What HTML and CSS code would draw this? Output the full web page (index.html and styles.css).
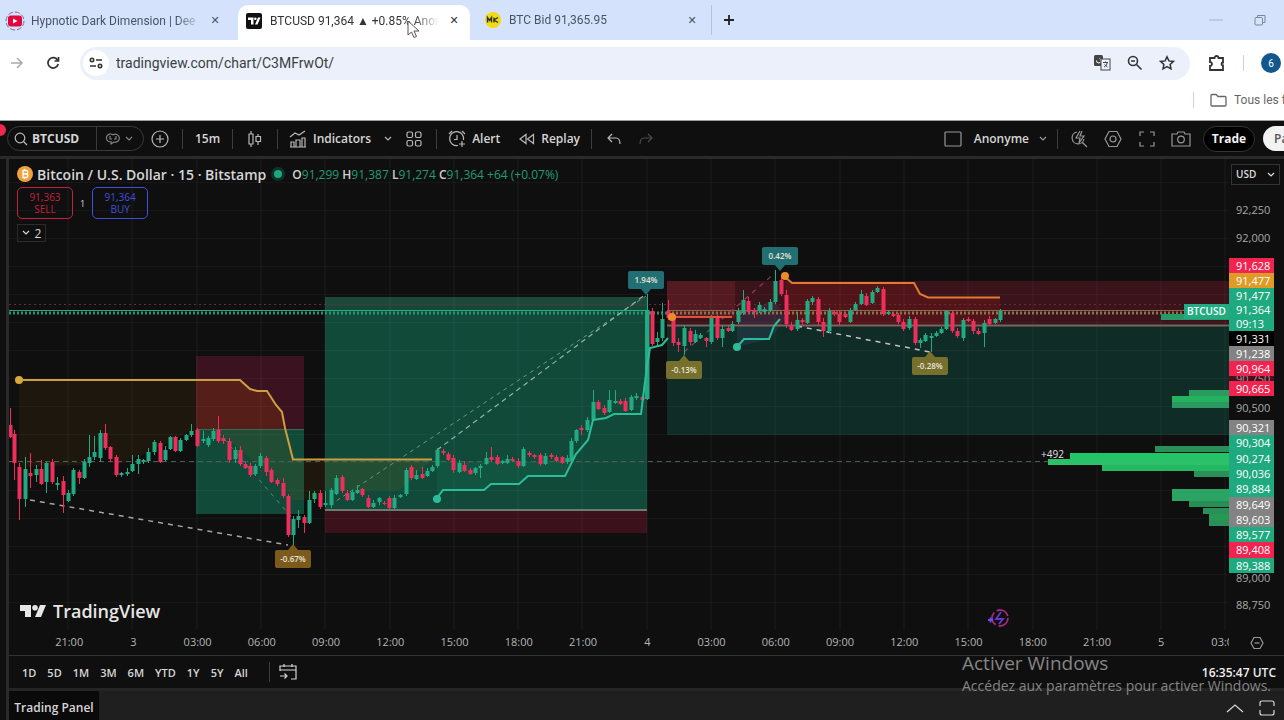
FILE: index.html
```html
<!DOCTYPE html>
<html lang="fr">
<head>
  <meta charset="UTF-8" />
  <meta name="viewport" content="width=device-width, initial-scale=1.0"/>
  <title>BTCUSD 91,364 - TradingView</title>
  <link rel="stylesheet" href="styles.css">
</head>
<body>
  <header class="browser">
    <div class="tabs">
      <div class="tab first">
        <svg width="20" height="20" viewBox="0 0 20 20"><circle cx="10" cy="10" r="9" fill="none" stroke="#7a6f8c" stroke-dasharray="5 2"/><rect x="3" y="4.500" width="14" height="11" rx="3" fill="#e3063c"/><path d="M8 7.500v5l4.500-2.500z" fill="#fff"/></svg>
        <span class="tab-title">Hypnotic Dark Dimension | Dee</span>
        <button class="x" aria-label="Close">&#10005;</button>
      </div>
      <div class="tab active">
        <svg width="16" height="16" viewBox="0 0 16 16"><rect width="16" height="16" rx="2" fill="#111"/><path d="M2 4.500h5.500v7H5V7H2zM12 4.500h2.500l-3 7H9z" fill="#fff"/><circle cx="9.300" cy="5.800" r="1.300" fill="#fff"/></svg>
        <span class="tab-title">BTCUSD 91,364 ▲ +0.85% Anonyme</span>
        <button class="x" aria-label="Close">&#10005;</button>
      </div>
      <div class="tab third">
        <svg width="16" height="16" viewBox="0 0 16 16"><circle cx="8" cy="8" r="8" fill="#f1dc12"/><path d="M2.500 10.500v-5l2 3 2-3v5M9 5.500v5M13 5.500l-4 2.500 4 2.500" fill="none" stroke="#333" stroke-width="1.400"/></svg>
        <span class="tab-title">BTC Bid 91,365.95</span>
        <button class="x" aria-label="Close">&#10005;</button>
      </div>
      <button class="new-tab" aria-label="New tab"><svg width="12" height="12" viewBox="0 0 12 12"><path d="M6 1v10M1 6h10" stroke="#222" stroke-width="1.800"/></svg></button>
      <div class="win-buttons">
        <svg width="16" height="12" viewBox="0 0 16 12"><path d="M1 6h14" stroke="#a9b4c8"/></svg>
        <svg width="12" height="12" viewBox="0 0 12 12" fill="none" stroke="#7c879c"><rect x="1" y="3.500" width="7.500" height="7.500" rx="1"/><path d="M3.500 3V1.500h7.500v7h-2"/></svg>
      </div>
    </div>

    <div class="nav">
      <button class="nav-btn" aria-label="Forward"><svg width="14" height="14" viewBox="0 0 14 14" fill="none" stroke="#aaa" stroke-width="1.500"><path d="M1 7h11M7 2l5 5-5 5"/></svg></button>
      <button class="nav-btn" aria-label="Reload"><svg width="14" height="14" viewBox="0 0 14 14" fill="none" stroke="#333" stroke-width="1.700"><path d="M11.800 4.500A5.200 5.200 0 1 0 12.200 8"/><path d="M12.500 1v4h-4"/></svg></button>
      <div class="omnibox">
        <span class="site-info"><svg width="14" height="12" viewBox="0 0 14 12" fill="none" stroke="#333" stroke-width="1.600"><circle cx="3" cy="3" r="1.700"/><path d="M7 3h6M1 9h6"/><circle cx="11" cy="9" r="1.700"/></svg></span>
        <input class="url" type="text" aria-label="Address" value="tradingview.com/chart/C3MFrwOt/">
        <svg width="18" height="18" viewBox="0 0 18 18"><rect x="1" y="1" width="9" height="11" rx="1.500" fill="#444"/><path d="M3.500 6.500a2.300 2.300 0 1 0 3-2" fill="none" stroke="#fff"/><rect x="8" y="5" width="9" height="11" fill="#eef2fa" stroke="#444"/><path d="M10 8.500h5M12.500 7.500v1M11 13c2-1 3-2.500 3-4M11.500 10.500l3 2.500" stroke="#444" fill="none"/></svg>
        <svg width="16" height="16" viewBox="0 0 16 16" fill="none" stroke="#333" stroke-width="1.600"><circle cx="6" cy="6" r="4.500"/><path d="M9.500 9.500l5 5M4 6h4"/></svg>
        <svg width="16" height="16" viewBox="0 0 16 16" fill="none" stroke="#333" stroke-width="1.500"><path d="M8 1.800l1.900 4.100 4.500.5-3.300 3 .9 4.500L8 11.700l-4 2.200.9-4.500-3.300-3 4.500-.5z"/></svg>
      </div>
      <svg width="18" height="18" viewBox="0 0 18 18" fill="none" stroke="#333" stroke-width="1.800"><path d="M2 4h4.500a2 2 0 0 1 4 0H15v4.500a1.500 1.500 0 0 0 0 3V16H2v-4a2 2 0 0 0 0-4z"/></svg>
      <i class="nav-line"></i>
      <button class="avatar">6</button>
    </div>

    <div class="bookmarks">
      <i class="nav-line"></i>
      <svg width="17" height="14" viewBox="0 0 17 14" fill="none" stroke="#666" stroke-width="1.300"><path d="M1 2.500a1 1 0 0 1 1-1h4l2 2h7a1 1 0 0 1 1 1V12a1 1 0 0 1-1 1H2a1 1 0 0 1-1-1z"/></svg>
      <a href="#">Tous les favoris</a>
    </div>
    <svg class="cursor" width="14" height="20" viewBox="0 0 14 20"><path d="M1 1v14l3.500-3 2.500 5.500 2.500-1L7 11h5z" fill="#fff" stroke="#555"/></svg>
  </header>

  <div class="app">
    <div class="toolbar">
      <span class="notif"></span>
      <div class="symbol-pill">
        <svg width="14" height="14" viewBox="0 0 14 14" class="ic"><circle cx="6" cy="6" r="4.800"/><path d="M9.500 9.500l3.500 3.500"/></svg>
        <button class="symbol">BTCUSD</button>
        <button class="compare" aria-label="Session"><svg width="16" height="14" viewBox="0 0 16 14" class="ic"><path d="M5 10a4 4 0 1 1 3-7M5 4v3h2M8 3a4 4 0 1 1 1 7l-3 2v-3M11 4v3H9"/></svg><svg width="8" height="6" viewBox="0 0 8 6" class="ic"><path d="M1 1l3 3 3-3"/></svg></button>
      </div>
      <button class="tb" aria-label="Add"><svg width="18" height="18" viewBox="0 0 18 18" class="ic"><circle cx="9" cy="9" r="8"/><path d="M9 5v8M5 9h8"/></svg></button>
      <i class="sep"></i>
      <button class="tb interval">15m</button>
      <i class="sep"></i>
      <button class="tb" aria-label="Candles"><svg width="16" height="18" viewBox="0 0 16 18" class="ic"><path d="M4 1v3M4 14v3M2 4h4v10H2zM11 4v2M11 12v3M9 6.500h4.500v5H9z"/></svg></button>
      <i class="sep"></i>
      <button class="tb wide"><svg width="18" height="18" viewBox="0 0 18 18" class="ic"><path d="M1 7l5-4 4 2 6-4M2 17v-5h3v5zM7 17v-7h4v7zM13 17V8h3v9zM1 17h16"/></svg>Indicators</button>
      <button class="tb dropdown" aria-label="Favorites"><svg width="8" height="6" viewBox="0 0 8 6" class="ic"><path d="M1 1l3 3 3-3"/></svg></button>
      <button class="tb small" aria-label="Layouts"><svg width="16" height="16" viewBox="0 0 16 16" class="ic"><rect x="1" y="1" width="5.500" height="5.500" rx="1.500"/><rect x="9.500" y="1" width="5.500" height="5.500" rx="1.500"/><rect x="1" y="9.500" width="5.500" height="5.500" rx="1.500"/><rect x="9.500" y="9.500" width="5.500" height="5.500" rx="1.500"/></svg></button>
      <i class="sep"></i>
      <button class="tb wide"><svg width="18" height="18" viewBox="0 0 18 18" class="ic"><path d="M15.500 10A7 7 0 1 0 10 15.500M9 5v4.500H6M1 4l3-3M17 4l-3-3M14 11v6M11 14h6"/></svg>Alert</button>
      <button class="tb wide replay"><svg width="16" height="12" viewBox="0 0 16 12" class="ic"><path d="M7 1.500v9L1 6zM14.500 1.500v9L8.500 6z"/></svg>Replay</button>
      <i class="sep"></i>
      <button class="tb" aria-label="Undo"><svg width="14" height="12" viewBox="0 0 14 12" class="ic"><path d="M5 1L1 5l4 4M1 5h8q4 0 4 6"/></svg></button>
      <button class="tb off" aria-label="Redo"><svg width="14" height="12" viewBox="0 0 14 12" class="ic"><path d="M9 1l4 4-4 4M13 5H5Q1 5 1 11"/></svg></button>

      <div class="tb-right">
        <button class="tb wide layout"><svg width="18" height="16" viewBox="0 0 18 16" class="ic"><rect x="1" y="1" width="16" height="14" rx="1"/></svg><span class="layout-name">Anonyme</span></button>
        <button class="tb small" aria-label="Manage layouts"><svg width="8" height="6" viewBox="0 0 8 6" class="ic"><path d="M1 1l3 3 3-3"/></svg></button>
        <i class="sep tight"></i>
        <button class="tb" aria-label="Quick search"><svg width="18" height="18" viewBox="0 0 18 18" class="ic"><path d="M7 2a6 6 0 1 0 7 7M12.500 12.500L17 17M10 1L6 8h4l-1 5 5-7h-4l2-5"/></svg></button>
        <button class="tb" aria-label="Settings"><svg width="18" height="18" viewBox="0 0 18 18" class="ic"><path d="M5 1.500h8L17 9l-4 7.500H5L1 9z"/><circle cx="9" cy="9" r="3"/></svg></button>
        <button class="tb" aria-label="Fullscreen"><svg width="16" height="16" viewBox="0 0 16 16" class="ic"><path d="M1 5V1h4M11 1h4v4M15 11v4h-4M5 15H1v-4"/></svg></button>
        <button class="tb" aria-label="Snapshot"><svg width="20" height="16" viewBox="0 0 20 16" class="ic"><path d="M1 3h5l1-2h6l1 2h5v12H1z"/><circle cx="10" cy="8.500" r="3.300"/></svg></button>
        <button class="trade">Trade</button>
        <button class="publish">Paper</button>
      </div>
    </div>

    <div class="workspace">
      <div class="main">
        <div class="chart-row">
          <div class="chart">
            <svg id="chart" viewBox="9 159 1220 471"></svg>
            <div class="legend">
              <div class="legend-title">
                <svg width="16" height="16" viewBox="0 0 16 16"><circle cx="8" cy="8" r="8" fill="#f0a13c"/><path d="M6 4v8M6 4.500h3a1.700 1.700 0 0 1 0 3.500H6h3.500a1.800 1.800 0 0 1 0 3.500H6M7.500 3v1.500M7.500 11.500V13" fill="none" stroke="#fff" stroke-width="1.300"/></svg>
                <h1>Bitcoin / U.S. Dollar · 15 · Bitstamp</h1>
                <span class="status"></span>
                <p class="ohlc"><b>O</b>91,299 <b>H</b>91,387 <b>L</b>91,274 <b>C</b>91,364 +64 (+0.07%)</p>
              </div>
              <div class="orders">
                <button class="sell">91,363<br>SELL</button>
                <span>1</span>
                <button class="buy">91,364<br>BUY</button>
              </div>
              <button class="collapse"><svg width="8" height="6" viewBox="0 0 8 6" class="ic"><path d="M1 1l3 3 3-3"/></svg>2</button>
            </div>
            <div class="brand">
              <svg width="28" height="16" viewBox="0 0 28 16" fill="#e6e6e6"><path d="M1 2h11v12H6V8H1z"/><circle cx="16" cy="4.800" r="2.800"/><path d="M21 2h6l-5 12h-6z"/></svg>
              TradingView
            </div>
            <svg class="spark" width="24" height="24" viewBox="0 0 24 24" fill="none" stroke-width="1.800"><circle cx="13" cy="12" r="8" stroke="#a02a78" stroke-dasharray="14 3"/><path d="M14 6l-5 7h7l-4 5" stroke="#6a35d0"/><path d="M1 14h5M3.500 11.500v5" stroke="#6a50e8"/></svg>
          </div>
          <div class="price-axis">
            <button class="currency">USD <svg width="8" height="6" viewBox="0 0 8 6" class="ic"><path d="M1 1l3 3 3-3"/></svg></button>
            <div class="ticks"><span>92,250</span><span>92,000</span></div>
            <div class="tags">
              <span class="red">91,628</span>
              <span class="orange">91,477</span>
              <span class="green">91,477</span>
              <span class="green last">91,364<br>09:13</span>
            </div>
            <div class="tags">
              <span class="black">91,331</span>
              <span class="gray">91,238</span>
              <span class="red">90,964</span>
              <span class="hidden-tick">90,750</span>
              <span class="red">90,665</span>
            </div>
            <span class="mid-tick">90,500</span>
            <div class="tags lower">
              <span class="gray">90,321</span>
              <span class="green">90,304</span>
              <span class="green">90,274</span>
              <span class="green">90,036</span>
              <span class="green">89,884</span>
              <span class="gray">89,649</span>
              <span class="gray">89,603</span>
              <span class="green">89,577</span>
              <span class="red">89,408</span>
              <span class="green">89,388</span>
            </div>
            <span class="cut-tick">89,000</span>
            <span class="low-tick">88,750</span>
          </div>
        </div>

        <div class="time-row">
          <div class="times">
            <span>21:00</span><span>3</span><span>03:00</span><span>06:00</span><span>09:00</span><span>12:00</span><span>15:00</span><span>18:00</span><span>21:00</span><span>4</span><span>03:00</span><span>06:00</span><span>09:00</span><span>12:00</span><span>15:00</span><span>18:00</span><span>21:00</span><span>5</span><span>03:00</span>
          </div>
          <button class="axis-settings" aria-label="Axis settings"><svg width="14" height="14" viewBox="0 0 14 14" class="ic"><path d="M4 1.500h6L13 7l-3 5.500H4L1 7z"/><path d="M4.500 7h5"/></svg></button>
        </div>

        <div class="ranges">
          <button>1D</button><button>5D</button><button>1M</button><button>3M</button><button>6M</button><button>YTD</button><button>1Y</button><button>5Y</button><button>All</button>
          <i class="sep"></i>
          <button class="goto" aria-label="Go to date"><svg width="18" height="18" viewBox="0 0 18 18" class="ic"><path d="M1 8V3h16v13h-5M1 7h16M5 1v3M13 1v3M1 13h7M5.500 10.500L8 13l-2.500 2.500"/></svg></button>
          <span class="clock">16:35:47 UTC</span>
        </div>

        <div class="bottom-panel">
          <button class="panel-tab">Trading Panel</button>
          <div class="panel-tools">
            <svg width="18" height="10" viewBox="0 0 18 10" class="ic"><path d="M1 9l8-7 8 7"/></svg>
            <svg width="16" height="16" viewBox="0 0 16 16" class="ic"><path d="M1 6V3q0-2 2-2h10q2 0 2 2v3M1 10v3q0 2 2 2h10q2 0 2-2v-3"/></svg>
          </div>
        </div>
      </div>
    </div>

    <div class="activate">
      <p class="activate-title">Activer Windows</p>
      <p>Accédez aux paramètres pour activer Windows.</p>
    </div>
  </div>

  <script src="script.js"></script>
</body>
</html>
```

FILE: styles.css
```css
* {
  box-sizing: border-box;
}
body {
  margin: 0;
  min-height: 100vh;
  display: flex;
  flex-direction: column;
  overflow: hidden;
  background-color: #0f0f0f;
  font-family: "Open Sans", "Noto Sans", sans-serif;
}
button {
  border: none;
  background: none;
  padding: 0;
  margin: 0;
  font: inherit;
  color: inherit;
  cursor: pointer;
}
p, h1 {
  margin: 0;
}
svg {
  display: block;
  flex-shrink: 0;
}
.ic {
  fill: none;
  stroke: currentColor;
  stroke-width: 1.2;
}

/* browser */
.browser {
  position: relative;
  background: #fff;
  color: #333;
  font-family: Roboto, sans-serif;
  font-size: 12px;
  height: 121px;
  border-bottom: 1px solid #9aa09e;
}
.tabs {
  display: flex;
  height: 40px;
  padding-top: 5px;
  background: #d5e2fc;
}
.tab {
  display: flex;
  align-items: center;
  height: 35px;
  padding-bottom: 4px;
  gap: 8px;
  color: #4a5268;
}
.tab.first {
  width: 238px;
  padding-left: 5px;
  padding-right: 16px;
  gap: 6px;
}
.tab.active {
  width: 232px;
  padding-left: 8px;
  padding-right: 9px;
  background: #fff;
  border-radius: 10px 10px 0 0;
  color: #333;
}
.tab.third {
  width: 242px;
  padding-left: 15px;
  padding-right: 12px;
  border-right: 1px solid #b5c2dc;
  height: 30px;
  padding-bottom: 0;
}
.tab-title {
  flex: 1;
  min-width: 0;
  overflow: hidden;
  white-space: nowrap;
  mask-image: linear-gradient(90deg, #000 85%, transparent);
}
.x {
  width: 14px;
  font-size: 11px;
  font-weight: bold;
  font-family: "DejaVu Sans", sans-serif;
}
.new-tab {
  width: 34px;
  height: 30px;
  display: flex;
  align-items: center;
  justify-content: center;
}
.win-buttons {
  display: flex;
  align-items: center;
  gap: 30px;
  height: 30px;
  margin-left: auto;
  padding-right: 18px;
}
.nav {
  display: flex;
  align-items: center;
  height: 46px;
  padding: 0 3px 0 0;
}
.nav-btn {
  width: 38px;
  display: flex;
  justify-content: center;
}
.nav-btn:first-child {
  width: 34px;
}
.omnibox {
  flex: 1;
  display: flex;
  align-items: center;
  gap: 16px;
  height: 33px;
  margin: 0 18px 0 8px;
  padding: 0 15px 0 3px;
  border-radius: 17px;
  background: #ebf0fa;
}
.site-info {
  display: flex;
  align-items: center;
  justify-content: center;
  width: 26px;
  height: 26px;
  border-radius: 50%;
  background: #fff;
}
.url {
  flex: 1;
  border: none;
  background: none;
  padding: 0;
  margin-left: -9px;
  outline: none;
  color: #3c4043;
  font: 14px Roboto, sans-serif;
}
.nav-line {
  width: 1px;
  height: 16px;
  margin: 0 17px;
  background: #c5d3ee;
}
.avatar {
  width: 20px;
  height: 20px;
  border-radius: 50%;
  background: #14578f;
  color: #fff;
  font-size: 10px;
}
.bookmarks {
  display: flex;
  align-items: center;
  justify-content: flex-end;
  height: 28px;
}
.bookmarks .nav-line {
  margin: 0 16px;
}
.bookmarks a {
  width: 50px;
  margin-left: 7px;
  overflow: hidden;
  white-space: nowrap;
  color: #666;
  text-decoration: none;
}
.cursor {
  position: absolute;
  left: 407px;
  top: 20px;
}

/* app */
.app {
  position: relative;
  flex: 1;
  display: flex;
  flex-direction: column;
  color: #d6d6d6;
  font-size: 12px;
}
.toolbar {
  position: relative;
  display: flex;
  align-items: center;
  height: 38px;
  padding-left: 7px;
  overflow: hidden;
  white-space: nowrap;
  font-weight: 600;
  border-bottom: 3px solid #2a2a2a;
}
.toolbar .ic {
  opacity: .85;
}
.notif {
  position: absolute;
  left: -6px;
  top: 3px;
  width: 12px;
  height: 12px;
  border-radius: 50%;
  background: #f0284f;
}
.symbol-pill {
  display: flex;
  align-items: center;
  width: 137px;
  height: 25px;
  padding-left: 6px;
  border: 1px solid #3a3a3a;
  border-radius: 13px;
}
.symbol {
  width: 68px;
  padding-left: 4px;
  text-align: left;
  font-weight: 700;
}
.compare {
  flex: 1;
  display: flex;
  align-items: center;
  justify-content: center;
  gap: 4px;
  height: 23px;
  padding-right: 3px;
  border-left: 1px solid #3a3a3a;
  color: #999;
}
.tb {
  display: flex;
  align-items: center;
  justify-content: center;
  width: 32px;
  height: 30px;
}
.tb.interval {
  width: 37px;
}
.tb.wide {
  width: auto;
  gap: 6px;
  padding: 0 5px;
}
.tb.dropdown {
  width: 24px;
}
.tb.small {
  width: 28px;
}
.tb.replay {
  padding-left: 14px;
}
.tb.small + .sep {
  margin-left: 8px;
}
.off {
  color: #555;
}
.sep {
  width: 1px;
  height: 20px;
  margin: 0 6px;
  background: #3d3d3d;
}
.tb-right {
  display: flex;
  align-items: center;
  margin-left: auto;
}
.tb-right .tb {
  color: #b0b0b0;
}
.tb-right .tb:not(.wide):not(.small) {
  width: 34px;
}
.tb.layout {
  padding-right: 0;
}
.layout-name {
  padding-left: 6px;
  color: #d6d6d6;
}
.tb.small + .sep.tight {
  margin: 0 4px 0 0;
}
.trade {
  width: 52px;
  height: 26px;
  margin: 0 8px 0 5px;
  border: 1px solid #333;
  border-radius: 13px;
  background: #000;
  color: #f0f0f0;
  font-weight: 700;
}
.publish {
  width: 21px;
  height: 25px;
  padding-left: 11px;
  overflow: hidden;
  text-align: left;
  border-radius: 13px 0 0 13px;
  background: #f2f2f2;
  color: #555;
}
.workspace {
  flex: 1;
  display: flex;
  padding-left: 6px;
}
.main {
  flex: 1;
  min-width: 0;
  display: flex;
  flex-direction: column;
  border-left: 3px solid #2a2a2a;
}
.chart-row {
  display: flex;
}
.chart {
  position: relative;
  flex: 1;
  min-width: 0;
}
#chart {
  width: 100%;
  height: auto;
}
.legend {
  position: absolute;
  left: 8px;
  top: 6px;
}
.legend-title {
  display: flex;
  align-items: center;
  height: 18px;
  gap: 4px;
  white-space: nowrap;
}
.legend-title h1 {
  font-size: 14px;
  font-weight: 600;
}
.status {
  width: 8px;
  height: 8px;
  margin: 0 6px 0 4px;
  border-radius: 50%;
  background: #1fa67d;
  box-shadow: 0 0 0 3px #0c3329;
}
.ohlc {
  color: #229a78;
}
.ohlc b {
  color: #d0d0d0;
  font-weight: 600;
}
.orders {
  display: flex;
  align-items: center;
  gap: 7px;
  margin-top: 4px;
}
.orders span {
  font-size: 9px;
}
.orders button {
  width: 56px;
  height: 32px;
  border: 1px solid;
  border-radius: 5px;
  font-size: 10px;
  line-height: 12px;
}
.sell {
  color: #c4213f;
}
.buy {
  color: #3f4fdc;
}
.collapse {
  display: flex;
  align-items: center;
  justify-content: center;
  gap: 5px;
  width: 29px;
  height: 18px;
  margin-top: 5px;
  border: 1px solid #2c2c2c;
}
.brand {
  position: absolute;
  left: 10px;
  bottom: 8px;
  display: flex;
  align-items: center;
  gap: 6px;
  font: 600 18px/22px "Open Sans", sans-serif;
  color: #e6e6e6;
}
.spark {
  position: absolute;
  right: 218px;
  bottom: 0;
}
.price-axis {
  width: 55px;
  padding-top: 5px;
  font-size: 11px;
  line-height: 15px;
  color: #a8a8a8;
}
.currency {
  display: flex;
  align-items: center;
  justify-content: space-between;
  width: 49px;
  height: 21px;
  margin-left: 2px;
  padding: 0 4px;
  border: 1px solid #333;
  font-weight: 600;
  font-size: 10px;
  color: #ddd;
}
.ticks {
  display: grid;
  grid-auto-rows: 28px;
  padding-top: 11px;
  height: 73px;
}
.price-axis span {
  display: block;
  padding-left: 7px;
}
.ticks span {
  line-height: 28px;
}
.tags {
  width: 45px;
  color: #fff;
}
.tags .last {
  height: 28px;
  line-height: 14px;
}
.tags .hidden-tick {
  height: 5px;
  line-height: 5px;
  overflow: hidden;
  background: #4a1020;
  color: #999;
}
.red {
  background: #f0244f;
}
.orange {
  background: #e09a26;
}
.green {
  background: #1fa97f;
}
.gray {
  background: #838383;
}
.black {
  background: #000;
}
.price-axis .mid-tick {
  line-height: 24px;
}
.tags.lower {
  display: grid;
  grid-auto-rows: 1fr;
  height: 153px;
}
.price-axis .cut-tick {
  height: 10px;
  line-height: 9px;
  overflow: hidden;
}
.price-axis .low-tick {
  padding-top: 14px;
}
.time-row {
  display: flex;
  height: 26px;
  border-bottom: 1px solid #333;
  font-size: 11px;
  line-height: 24px;
  color: #b5b5b5;
}
.times {
  flex: 1;
  min-width: 0;
  display: flex;
  overflow: hidden;
  padding-left: 2.2%;
}
.times span {
  flex: 0 0 5.39%;
  text-align: center;
}
.axis-settings {
  display: flex;
  align-items: center;
  justify-content: center;
  width: 55px;
  color: #999;
}
.ranges {
  display: flex;
  align-items: center;
  height: 35px;
  gap: 11px;
  padding: 0 8px 0 13px;
  font-weight: 600;
  font-size: 11px;
  border-bottom: 3px solid #252525;
}
.ranges .sep {
  margin: 0 0 0 10px;
}
.goto {
  margin-left: -2px;
}
.clock {
  margin-left: auto;
  font-size: 12px;
  color: #eee;
}
.bottom-panel {
  flex: 1;
  display: flex;
  justify-content: space-between;
  background: #1f1f1f;
}
.panel-tab {
  width: 90px;
  padding-top: 4px;
  background: #0a0a0a;
  font-weight: 600;
}
.panel-tools {
  display: flex;
  align-items: center;
  gap: 15px;
  padding: 4px 9px 0 0;
}
.activate {
  position: absolute;
  right: 9px;
  bottom: 25px;
  width: 313px;
  white-space: nowrap;
  color: #858585;
  font-size: 14px;
  line-height: 19px;
}
.activate-title {
  font-size: 19px;
  line-height: 26px;
}
```

FILE: script.js
```js
const UP = "#22ab82";
const DOWN = "#ee2f5c";

// x, high, body top, body bottom, low, 1 = up / 0 = down
const candles = [
  [10,408,425,437,438,0],[14,430,434,463,480,0],[19,463,467,499,520,0],[25,457,469,499,507,1],[30,453,473,476,488,0],
  [36,465,469,475,482,1],[41,460,469,484,485,0],[46,462,463,482,493,1],[52,459,462,482,484,0],[57,477,483,485,490,1],
  [63,476,481,495,513,0],[68,490,493,501,502,1],[73,468,470,494,496,1],[79,470,472,478,484,0],[84,459,462,478,479,1],
  [89,435,457,463,467,1],[94,436,452,457,460,1],[100,430,433,458,462,1],[105,424,433,448,450,0],[110,446,447,459,462,0],
  [116,455,457,475,477,0],[121,472,473,475,477,1],[127,468,472,474,476,1],[132,455,464,471,472,1],[138,455,459,464,474,1],
  [143,459,460,462,464,1],[148,448,452,461,463,1],[154,440,442,452,455,1],[160,441,443,462,463,0],[165,446,450,460,461,1],
  [170,436,437,449,450,1],[175,436,437,451,452,0],[180,438,440,451,452,1],[186,434,435,440,441,1],[191,424,431,435,437,1],
  [197,428,430,446,447,0],[203,431,439,441,443,1],[208,436,438,445,447,1],[213,428,431,439,441,1],[218,416,430,441,443,0],
  [223,435,438,441,444,0],[229,438,441,460,463,0],[235,447,450,459,463,1],[240,446,450,464,466,0],[245,462,464,468,469,0],
  [250,463,466,475,477,0],[255,464,466,474,476,1],[260,453,456,466,468,1],[266,456,458,472,476,0],[271,468,470,482,483,0],
  [277,478,480,484,486,0],[283,478,483,496,498,0],[288,494,496,535,537,0],[293,516,519,535,548,1],[298,510,516,520,528,1],
  [304,515,517,523,533,0],[309,491,500,523,524,1],[314,491,493,499,503,1],[320,490,493,507,509,0],[325,491,503,505,507,1],
  [331,488,490,505,508,1],[336,475,478,494,495,1],[342,475,477,491,493,0],[347,490,493,500,501,0],[352,490,492,500,501,1],
  [357,485,490,493,494,1],[362,488,489,495,497,0],[368,495,498,507,508,0],[373,500,503,507,508,1],[379,497,498,502,505,1],
  [384,501,503,504,505,0],[389,496,498,508,509,0],[394,495,498,508,509,1],[400,494,495,497,498,1],[406,468,470,494,496,1],
  [411,465,467,478,480,0],[416,470,475,479,480,1],[422,467,474,478,479,0],[427,468,471,476,477,1],[432,465,467,471,472,1],
  [437,448,450,466,468,1],[443,449,451,453,455,0],[448,452,454,460,461,0],[453,455,458,470,473,0],[459,460,463,472,473,1],
  [464,461,465,471,472,0],[470,468,470,474,475,0],[475,467,468,473,475,1],[480,464,466,468,478,1],[486,452,458,464,465,1],
  [491,447,457,460,462,0],[497,455,457,464,465,0],[502,460,461,463,464,1],[507,455,459,463,464,1],[512,457,459,461,462,0],
  [518,458,461,466,468,0],[523,447,449,466,467,1],[529,451,453,455,457,0],[534,454,455,457,459,0],[540,453,455,464,466,0],
  [545,453,456,464,465,1],[551,453,455,457,459,0],[556,455,457,461,462,0],[562,456,457,463,464,0],[567,455,458,462,464,1],
  [571,438,441,461,463,1],[576,429,430,441,443,1],[581,425,428,430,435,0],[587,417,420,430,432,1],[593,390,402,420,421,1],
  [598,400,402,409,410,0],[604,405,408,413,415,0],[609,390,400,412,413,1],[615,390,401,403,404,1],[620,399,401,404,405,0],
  [625,398,401,411,412,0],[631,395,397,410,411,1],[636,393,396,398,400,1],[642,396,397,400,401,0],[647,294,310,399,400,1],
  [652,308,311,344,346,0],[657,332,338,342,345,1],[662,303,319,338,341,1],[668,300,311,318,320,0],[673,315,318,343,346,0],
  [678,338,342,345,352,0],[684,325,328,346,355,1],[690,328,331,342,345,0],[695,330,334,342,343,1],[700,333,335,338,339,1],
  [706,337,338,341,347,0],[711,315,318,342,344,1],[717,315,318,338,340,0],[722,325,329,338,347,1],[728,325,328,331,332,0],
  [732,321,324,331,332,1],[738,308,311,322,324,1],[743,290,300,313,315,1],[748,297,301,312,313,0],[754,308,310,312,318,0],
  [759,302,305,311,313,1],[764,307,309,312,313,1],[770,299,302,311,312,1],[775,270,281,302,304,1],[781,275,280,294,296,0],
  [786,290,295,324,328,0],[791,322,325,330,331,0],[797,314,320,329,331,1],[802,318,320,322,325,0],[807,299,301,323,324,1],
  [812,296,298,302,305,1],[818,297,299,322,325,0],[823,318,322,331,337,0],[829,308,311,331,333,1],[834,310,312,314,316,0],
  [839,310,314,322,325,0],[845,312,314,317,318,0],[850,308,310,322,323,1],[855,302,304,310,311,1],[861,290,294,304,305,1],
  [866,293,296,305,306,0],[872,290,292,303,304,1],[877,286,288,292,293,1],[883,287,289,314,316,0],[888,310,312,314,315,1],
  [893,312,314,316,317,0],[898,313,315,322,324,0],[903,319,322,329,331,0],[909,316,319,328,330,1],[915,317,319,343,345,0],
  [920,338,340,343,348,1],[925,333,335,341,342,1],[931,333,336,338,352,1],[936,331,333,336,337,1],[941,327,329,333,334,1],
  [946,310,311,329,330,1],[952,310,313,331,333,0],[957,328,331,336,338,0],[963,318,320,338,341,1],[968,317,319,321,322,0],
  [973,319,321,331,334,0],[978,328,331,334,335,0],[984,320,323,333,347,1],[989,316,319,324,326,0],[995,318,319,323,324,1],
  [1000,309,311,320,322,1]
];

// left edge, top, colour
const profile = [
  [1161,314,"#279a68"],[1189,390,"#2b9a5f"],[1172,396,"#25b25f"],[1172,402,"#2c9a60"],[1155,446,"#2b8f5a"],
  [1070,453,"#22c566"],[1048,459,"#2cc06a"],[1102,465,"#25b862"],[1194,471,"#2b8f5a"],[1172,489,"#2ba463"],
  [1172,495,"#2ba463"],[1189,501,"#258f55"],[1203,508,"#2b8f5a"],[1209,514,"#25994f"],[1209,520,"#2b8f5a"]
];

// centre x, top, text, colour, arrow direction
const labels = [
  [646,271,"1.94%","#226f73","down"],
  [780,247,"0.42%","#226f73","down"],
  [684,361,"-0.13%","#77702c","up"],
  [930,357,"-0.28%","#77702c","up"],
  [293,550,"-0.67%","#7c5a1d","up"]
];

const rect = (x, y, x2, y2, fill) => `<rect x="${x}" y="${y}" width="${x2 - x}" height="${y2 - y}" fill="${fill}"/>`;
const line = (d, stroke, width = 1, dash = "none") => `<path d="${d}" fill="none" stroke="${stroke}" stroke-width="${width}" stroke-dasharray="${dash}"/>`;

let out = "";

// position boxes
out += rect(196, 356, 304, 429, "#3b1320") + rect(196, 429, 304, 514, "#124a3a");
out += rect(325, 297, 647, 510, "#124a3a") + rect(325, 297, 647, 306, "#1d493a") + rect(325, 510, 647, 533, "#3b111c");
out += rect(667, 281, 1229, 325, "#3a131b") + rect(667, 325, 1229, 435, "#0f2c26");

// zones between trend line and price
out += `<path d="M19 380H240L252 390L268 392L284 418L293 460H325V500H293L283 482L240 450L218 430L191 431L150 452L116 465L105 435L84 465L19 467Z" fill="#c06a00" fill-opacity=".09"/>`;
out += `<path d="M325 460H432L400 490L330 490H325Z" fill="#b08000" fill-opacity=".1"/>`;
out += `<path d="M196 380H240L252 390L268 392L282 415V429H196Z" fill="#b03000" fill-opacity=".16"/>`;
out += rect(667, 281, 735, 318, "#541a22");
out += `<path d="M785 277L792 283H914L922 297H1000V325H785Z" fill="#c02010" fill-opacity=".17"/>`;
out += `<path d="M737 347V325L743 312L775 300L786 318L770 339Z" fill="#3a4a70" fill-opacity=".3"/>`;
out += `<path d="M437 499L445 490H484L491 484H520L527 476H565L571 461L486 462L437 460Z" fill="#12a070" fill-opacity=".12"/>`;

// grid
for (let i = 0; i < 19; i++) {
  out += line(`M${Math.round(68 + i * 64.3)} 159V630`, "rgba(255,255,255,.06)");
}
for (let y = 182; y < 630; y += 28) {
  out += line(`M9 ${y}.5H1229`, "rgba(255,255,255,.035)");
}

// price levels
out += line("M9 461.5H1048", "#4d5c56", 1, "5 4");
out += line("M9 304.500H1229", "#6b2a34", 1, "2 3");
out += line("M9 310.500H647", "#2aa681", 1);
out += line("M9 313H668", "#2a8f70", 3, "2 2");
out += line("M667 310.500H1229", "#8a6a4c");
out += line("M668 313H1190", "#8c7350", 3, "2 2");
out += line("M325 510H647", "#6c7a72", 2);
out += line("M667 325.500H1229", "#77675f", 2);
out += line("M196 429.500H304", "#3b6a50");

// zigzag
out += line("M30 500L288 545", "#a5a5a5", 1.5, "5 5");
out += line("M218 432L293 519", "#4f8d77", 1, "4 5");
out += line("M330 505L646 296", "#5f9a80", 1, "4 4");
out += line("M437 450L646 294", "#8fb5a2", 1.200, "5 4");
out += line("M684 352L775 273", "#8f3f55", 1.200, "5 5");
out += line("M797 326L930 352", "#c0c0c0", 1.500, "5 5");

// volume profile
profile.forEach(([x, y, color]) => out += rect(x, y, 1229, y + 6, color));

// candles
candles.forEach(([x, high, top, bottom, low, up]) => {
  const color = up ? UP : DOWN;
  out += line(`M${x}.5 ${high}V${low}`, color);
  out += rect(x - 1.5, top, x + 2.5, bottom, color);
});
out += rect(645, 310, 649, 399, UP);

// trend lines
out += line("M19 380H240L250 389L257 391H267L276 405L282 412L285 428L293 459.500H432", "#caa040", 2);
out += line("M672 317H732", "#e0503a", 2);
out += line("M785 277L792 283H914L920 294L928 297.500H1000", "#e07a30", 2);
out += line("M437 498L443 490H484L491 484H519L528 476H565L576 454L588 440L593 420L606 418L614 414H641L647 366L650 348L662 345L668 338", "#2bbd9a", 2);
out += line("M737 347L744 339H769L774 326L780 319", "#2bbd9a", 2);
[[19,380,"#d6a83e"],[672,317,"#ee8a2e"],[785,276,"#ee8a2e"],[437,499,"#2bbd9a"],[737,347,"#2bbd9a"]].forEach(([x, y, c]) => {
  out += `<circle cx="${x}" cy="${y}" r="4" fill="${c}"/>`;
});

// pivot labels
labels.forEach(([x, y, text, color, dir]) => {
  const tip = dir === "down" ? `M${x - 5} ${y + 18}h10l-5 6z` : `M${x - 5} ${y}h10l-5-6z`;
  out += `<rect x="${x - 18}" y="${y}" width="36" height="18" rx="2" fill="${color}"/><path d="${tip}" fill="${color}"/>`;
  out += `<text x="${x}" y="${y + 12}" text-anchor="middle" font-size="8" font-weight="600" fill="#e4e4d8">${text}</text>`;
});

out += `<rect x="1184" y="304" width="45" height="15" fill="${UP}"/>`;
out += `<text x="1187" y="315" font-size="10" font-weight="600" fill="#fff">BTCUSD</text>`;
out += `<text x="1041" y="458" font-size="10" fill="#e0e0e0">+492</text>`;

document.getElementById("chart").innerHTML = out;
```
